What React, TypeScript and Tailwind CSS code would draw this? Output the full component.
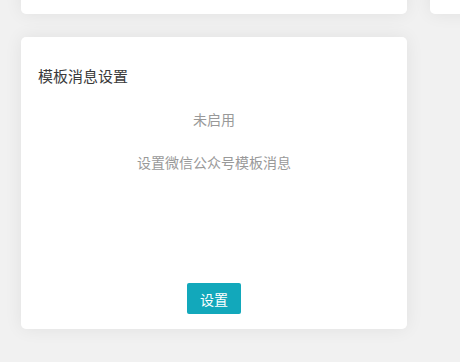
import * as React from "react";

const font = { fontFamily: '"Noto Sans CJK SC", "Noto Sans", sans-serif' };

function Card({ className = "", children }: { className?: string; children?: React.ReactNode }) {
  return (
    <div
      className={
        "bg-white rounded-[5px] shadow-[0_0_18px_rgba(0,0,0,0.07)] h-[292px] flex flex-col " +
        className
      }
    >
      {children}
    </div>
  );
}

export default function App() {
  return (
    <div className="w-[460px] h-[362px] overflow-hidden bg-[#f1f1f1]" style={font}>
      {/* 卡片网格，已向下滚动 */}
      <div className="grid grid-cols-[386px_386px] gap-x-[23px] gap-y-[23px] pl-[21px] mt-[-278px]">
        <Card />
        <Card />
        <Card>
          <div className="pt-[29px] px-[17px] text-[15px] leading-5 text-[#3a3a3a]">模板消息设置</div>
          <div className="flex flex-col items-center text-[14px] text-[#999] leading-5 mt-[23px] gap-[23px]">
            <span>未启用</span>
            <span>设置微信公众号模板消息</span>
          </div>
          <div className="mt-auto pb-[15px] flex justify-center">
            <button
              type="button"
              className="w-[54px] h-[31px] rounded-[2px] bg-[#12a8bb] text-white text-[14px] leading-none"
            >
              设置
            </button>
          </div>
        </Card>
      </div>
    </div>
  );
}
